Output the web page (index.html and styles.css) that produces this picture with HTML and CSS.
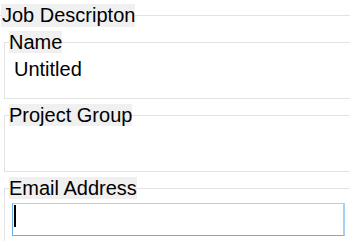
FILE: index.html
```html
<!DOCTYPE html>
<html>
<head>
<meta charset="utf-8">
<link rel="stylesheet" href="styles.css">
</head>
<body>
<fieldset class="outer">
  <legend class="outer-legend">Job Descripton</legend>
  <fieldset class="box">
    <legend class="label">Name</legend>
    <div class="value">Untitled</div>
  </fieldset>
  <fieldset class="box">
    <legend class="label">Project Group</legend>
    <div class="value"></div>
  </fieldset>
  <fieldset class="box last">
    <legend class="label">Email Address</legend>
    <div class="textbox"><span class="caret"></span></div>
  </fieldset>
</fieldset>
</body>
</html>
```
FILE: styles.css
```css
html, body {
  margin: 0;
  padding: 0;
  background: #ffffff;
  overflow: hidden;
  width: 350px;
  height: 242px;
}
body {
  font-family: "Liberation Sans", Arial, sans-serif;
  font-size: 20px;
  color: #000;
}
fieldset {
  margin: 0;
  min-width: 0;
}
.outer {
  margin-top: 4px;
  width: 350px;
  box-sizing: border-box;
  border: 0;
  border-top: 1px solid #e3e3e3;
  padding: 0 0 0 1px;
}
.outer-legend {
  padding: 0 0 0 1px;
  background: #f0f0f0;
  line-height: 23px;
  height: 23px;
}
.box {
  margin: 4px 0 0 3px;
  width: 346px;
  box-sizing: border-box;
  border: 1px solid #e3e3e3;
  border-right: 0;
  padding: 0 0 0 4px;
}
.box + .box {
  margin-top: 5px;
}
.label {
  padding: 0;
  background: #f0f0f0;
  line-height: 22px;
  height: 22px;
}
.value {
  height: 45px;
  box-sizing: border-box;
  padding: 5px 0 0 5px;
  line-height: 23px;
}
.last {
  border-bottom: 0;
  padding-bottom: 5px;
}
.textbox {
  margin: 4px 0 0 3px;
  width: 333px;
  height: 33px;
  box-sizing: border-box;
  border: 1px solid #6aaee6;
  border-top-color: #a6d1f3;
  border-right: 2px solid #a6d1f3;
  display: flex;
  align-items: flex-start;
  padding: 1px 0 0 1px;
}
.caret {
  display: block;
  width: 2px;
  height: 22px;
  background: #000;
}
```
